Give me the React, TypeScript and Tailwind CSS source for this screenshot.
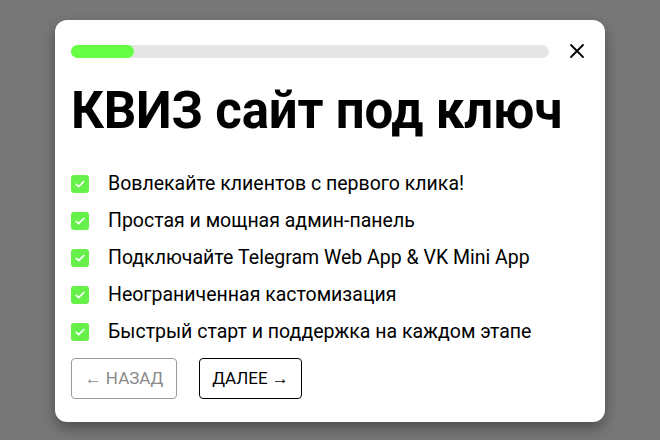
import { X } from "lucide-react";

const features = [
  "Вовлекайте клиентов с первого клика!",
  "Простая и мощная админ-панель",
  "Подключайте Telegram Web App & VK Mini App",
  "Неограниченная кастомизация",
  "Быстрый старт и поддержка на каждом этапе",
];

function Check() {
  return (
    <span className="flex h-[18px] w-[18px] shrink-0 items-center justify-center rounded-[3px] bg-[#66f04a]">
      <svg viewBox="0 0 16 16" className="h-[12px] w-[12px]" fill="none">
        <path d="M3 8.5l3.2 3L13 4.8" stroke="white" strokeWidth="2.2" strokeLinecap="round" strokeLinejoin="round" />
      </svg>
    </span>
  );
}

export default function App() {
  return (
    <main
      className="flex h-[440px] w-[660px] items-start justify-center bg-[#777777] pt-[20px]"
      style={{ fontFamily: "Roboto, 'Noto Sans', sans-serif" }}
    >
      <div className="w-[550px] rounded-[12px] bg-white px-[16px] pb-[23px] pt-[19px] shadow-[0_6px_14px_rgba(0,0,0,0.35)]">
        {/* progress + close */}
        <div className="flex items-center gap-[16px]">
          <div className="h-[13px] flex-1 rounded-full bg-[#e6e6e6]">
            <div className="h-full w-[63px] rounded-full bg-[#66ff44]" />
          </div>
          <button className="text-black">
            <X size={24} strokeWidth={1.8} />
          </button>
        </div>

        <h1 className="mt-[20px] text-[51px] font-bold leading-[56px] tracking-[-0.2px] text-black">
          КВИЗ сайт под ключ
        </h1>

        <ul className="mt-[33px] flex flex-col gap-[13px]">
          {features.map((f) => (
            <li key={f} className="flex h-[24px] items-center gap-[19px] text-[19.5px] text-black">
              <Check />
              <span>{f}</span>
            </li>
          ))}
        </ul>

        <div className="mt-[14px] flex gap-[22px]">
          <button className="h-[41px] w-[106px] rounded-[4px] border border-[#999] text-[17px] text-[#8a8a8a]">
            ← НАЗАД
          </button>
          <button className="h-[41px] w-[103px] rounded-[4px] border border-black text-[17px] text-black">
            ДАЛЕЕ →
          </button>
        </div>
      </div>
    </main>
  );
}
